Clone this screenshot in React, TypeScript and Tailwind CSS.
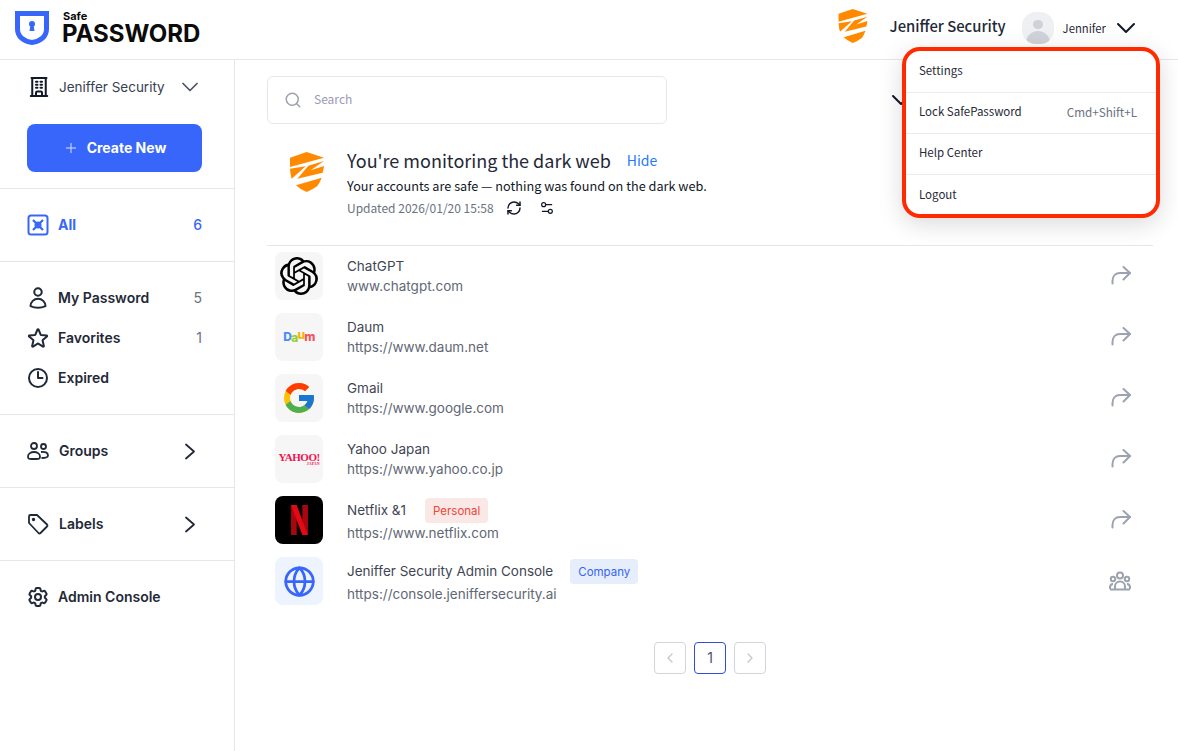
import { ChevronDown, ChevronLeft, ChevronRight, Globe, Plus, RefreshCw, Search, Settings2 } from 'lucide-react'
import { FcGoogle } from 'react-icons/fc'
import { HiOutlineBuildingOffice, HiOutlineClock, HiOutlineCog6Tooth, HiOutlineStar, HiOutlineUser } from 'react-icons/hi2'
import { SiOpenai } from 'react-icons/si'

function ZShield({ className }: { className: string }) {
  return (
    <svg viewBox="0 0 102 120" className={className} fill="#ff8a00">
      <path d="M0 17 50 0 102 17 0 45Z" />
      <path d="M0 50 47 43 5 80Q1 65 0 50Z" />
      <path d="M102 27 55 41 22 80 98 62Q101 52 102 42L62 55Z" />
      <path d="M18 100 95 77Q90 92 82 102 68 113 50 120 30 112 18 100Z" />
    </svg>
  )
}

function ShareArrow() {
  return (
    <svg viewBox="0 0 22 20" className="h-5 w-[22px]" fill="none" stroke="#9ca3af" strokeWidth="2" strokeLinecap="round" strokeLinejoin="round">
      <path d="M3.500 17.500V15C3.500 10 6.500 7 11 7H21" />
      <path d="M14.500 1 21 7 14.500 13.500" />
    </svg>
  )
}

function TeamIcon() {
  return (
    <svg viewBox="0 0 22 20" className="h-5 w-[22px]" fill="none" stroke="#9ca3af" strokeWidth="2">
      <circle cx="11" cy="4.500" r="3" />
      <circle cx="4" cy="8" r="2.200" />
      <circle cx="18" cy="8" r="2.200" />
      <path d="M6 18v-2.500a5 5 0 0 1 10 0V18" />
      <path d="M1 18v-1.500C1 14 2 13 4 13M21 18v-1.500c0-2.500-1-3.500-3-3.500M1 18.500h20" />
    </svg>
  )
}

function NavCount({ value }: { value: number }) {
  return <span className="ml-auto text-sm font-normal text-[#6b7280]">{value}</span>
}

function NavChevron() {
  return (
    <svg viewBox="0 0 12 17" className="ml-auto mr-[6px] h-[17px] w-3" fill="none" stroke="#1f2937" strokeWidth="1.800" strokeLinecap="round" strokeLinejoin="round">
      <path d="M2 1.500 10 8.500 2 15.500" />
    </svg>
  )
}

const rows = [
  { name: 'ChatGPT', url: 'www.chatgpt.com', logo: <SiOpenai className="h-[38px] w-[38px] text-black" /> },
  {
    name: 'Daum',
    url: 'https://www.daum.net',
    logo: (
      <span className="flex items-center text-xs font-extrabold leading-none tracking-[-0.8px]">
        <span className="text-[#4a8cf7]">D</span>
        <span className="translate-y-[1px] text-[#9acd32]">a</span>
        <span className="-translate-y-[2px] text-[#f6b500]">u</span>
        <span className="text-[#f2545b]">m</span>
      </span>
    ),
  },
  { name: 'Gmail', url: 'https://www.google.com', logo: <FcGoogle className="h-9 w-9" /> },
  {
    name: 'Yahoo Japan',
    url: 'https://www.yahoo.co.jp',
    logo: (
      <span className="flex flex-col items-end text-[11px] font-bold leading-[9px] tracking-[-0.5px] text-[#f0134d] [font-family:'Liberation_Serif',serif]">
        YAHOO!
        <span className="text-[4px] leading-[4px] tracking-normal">JAPAN</span>
      </span>
    ),
  },
  {
    name: 'Netflix &1',
    url: 'https://www.netflix.com',
    tile: 'bg-black',
    tag: 'Personal',
    tagClass: 'ml-[19px] bg-[#fae8e6] text-[#f04438]',
    logo: (
      <svg viewBox="0 0 18 32" className="h-[30px] w-[17px]">
        <path d="M0 0h6v32l-6 .6z" fill="#a80710" />
        <path d="M12 0h6v32.600l-6-.600z" fill="#a80710" />
        <path d="M0 0h6l12 32.600-6-.600z" fill="#e50914" />
      </svg>
    ),
  },
  {
    name: 'Jeniffer Security Admin Console',
    url: 'https://console.jeniffersecurity.ai',
    tile: 'bg-[#eef4ff]',
    tag: 'Company',
    tagClass: 'ml-[17px] bg-[#e6eefc] text-[#3563f5]',
    team: true,
    logo: <Globe className="h-[33px] w-[33px] text-[#3866fb]" strokeWidth={2} />,
  },
]

export default function App() {
  return (
    <div className="relative flex h-[751px] w-[1178px] flex-col overflow-hidden bg-white text-[#1f2937] [font-family:Inter,sans-serif]">
      <header className="flex h-[60px] shrink-0 items-center justify-between border-b border-[#e5e7eb] pb-[3px] pl-[15px] pr-9">
        <div className="flex items-center gap-[13px]">
          <svg viewBox="0 0 34 34" className="h-[34px] w-[34px]" fill="none">
            <path d="M2.500 2.500h29V18c0 7.500-6 12.500-14.500 13.500C8.500 30.500 2.500 25.500 2.500 18z" stroke="#3866fb" strokeWidth="5" />
            <circle cx="17" cy="13" r="3" fill="#3866fb" />
            <path d="M15.500 14h3l1 6h-5z" fill="#3866fb" />
          </svg>
          <div className="flex flex-col text-[#0b0b0b]">
            <span className="-mt-[1px] ml-[1px] text-[11px] font-bold leading-[12px]">Safe</span>
            <span className="text-[24px] font-bold leading-[24px]">PASSWORD</span>
          </div>
        </div>
        <div className="flex items-center [font-family:'Noto_Sans_CJK_KR',sans-serif]">
          <ZShield className="-mt-1 h-[34px] w-[30px]" />
          <span className="ml-[22px] -translate-y-[2px] text-[14.800px] font-medium">Jeniffer Security</span>
          <span className="ml-4 flex h-8 w-8 flex-col items-center overflow-hidden rounded-[14px] bg-[#eff0f3]">
            <span className="mt-2 h-[10px] w-[10px] rounded-full bg-[#cfd2d9]" />
            <span className="mt-[2px] h-[14px] w-6 rounded-t-full bg-[#cfd2d9]" />
          </span>
          <span className="ml-[9px] text-[11.300px]">Jennifer</span>
          <ChevronDown className="ml-1 h-8 w-8 text-[#111827]" strokeWidth={1.500} />
        </div>
      </header>

      <div className="flex min-h-0 flex-1">
        <aside className="w-[235px] shrink-0 border-r border-[#e5e7eb]">
          <div className="border-b border-[#e5e7eb] px-[27px] pb-4 pt-[7px]">
            <div className="flex h-10 items-center">
              <HiOutlineBuildingOffice className="h-6 w-6 text-[#111827] [stroke-width:2]" />
              <span className="ml-2 text-[13.500px] text-[#374151]">Jeniffer Security</span>
              <ChevronDown className="ml-auto mr-[3px] h-7 w-7 text-[#4b5563]" strokeWidth={1.500} />
            </div>
            <button className="mt-[17px] flex h-12 w-[175px] items-center justify-center gap-2 rounded-lg bg-[#3866fb] text-sm font-bold text-white">
              <Plus className="h-4 w-4 opacity-80" strokeWidth={1.500} />
              Create New
            </button>
          </div>

          <div className="flex h-[73px] items-center border-b border-[#e5e7eb] pl-[27px] pr-[32px] text-sm font-bold text-[#3866fb]">
            <svg viewBox="0 0 22 22" className="h-[22px] w-[22px]" fill="none" stroke="#3866fb" strokeWidth="2">
              <rect x="1.500" y="1.500" width="19" height="19" rx="2.500" />
              <path d="M6 6l10 10M16 6 6 16" strokeWidth="2.200" />
              <circle cx="11" cy="11" r="2.500" />
            </svg>
            <span className="ml-[9px]">All</span>
            <span className="ml-auto font-medium">6</span>
          </div>

          <div className="flex flex-col border-b border-[#e5e7eb] py-4 pl-[26px] pr-[32px] text-sm font-semibold">
            <div className="flex h-10 items-center gap-2">
              <HiOutlineUser className="h-6 w-6 [stroke-width:2]" />
              My Password
              <NavCount value={5} />
            </div>
            <div className="flex h-10 items-center gap-2">
              <HiOutlineStar className="h-6 w-6 [stroke-width:2]" />
              Favorites
              <NavCount value={1} />
            </div>
            <div className="flex h-10 items-center gap-2">
              <HiOutlineClock className="h-6 w-6 [stroke-width:2]" />
              Expired
            </div>
          </div>

          <div className="flex h-[73px] items-center gap-[10px] border-b border-[#e5e7eb] pl-[27px] pr-[32px] text-sm font-semibold">
            <svg viewBox="0 0 22 18" className="h-[18px] w-[22px]" fill="none" stroke="#1f2937" strokeWidth="1.800">
              <circle cx="7" cy="4" r="3" />
              <circle cx="16.500" cy="4.500" r="2.500" />
              <path d="M1 14.500C1 11.500 4 10 7 10s6 1.500 6 4.500-1.500 2.500-6 2.500-6 .5-6-2.500z" />
              <path d="M14 10c4-.5 7 .5 7 3.500 0 2-2 2.500-6.500 2.500" />
            </svg>
            Groups
            <NavChevron />
          </div>

          <div className="flex h-[73px] items-center gap-[10px] border-b border-[#e5e7eb] pl-[27px] pr-[32px] text-sm font-semibold">
            <svg viewBox="0 0 22 22" className="h-[22px] w-[22px]" fill="none" stroke="#1f2937" strokeWidth="1.800" strokeLinejoin="round">
              <path d="M2 3.500A1.500 1.500 0 0 1 3.500 2H10l10 9.500a1.500 1.500 0 0 1 0 2L13.500 20a1.500 1.500 0 0 1-2 0L2 10z" />
              <circle cx="6.500" cy="6.500" r=".8" fill="#1f2937" />
            </svg>
            Labels
            <NavChevron />
          </div>

          <div className="flex h-[72px] items-center gap-2 pl-[26px] text-sm font-semibold">
            <HiOutlineCog6Tooth className="h-6 w-6 [stroke-width:2]" />
            Admin Console
          </div>
        </aside>

        <main className="min-w-0 flex-1 pl-8 pr-[25px] pt-4">
          <div className="flex items-center">
            <div className="flex h-12 w-[400px] items-center rounded-md border border-[#e5e7eb] pl-4">
              <Search className="h-[18px] w-[18px] text-[#9ca3af]" />
              <span className="ml-3 -translate-y-[1px] text-xs text-[#9a9ab5] [font-family:'Noto_Sans_CJK_KR',sans-serif]">Search</span>
            </div>
            <ChevronDown className="ml-[218px] h-8 w-8 text-[#111827]" strokeWidth={1.500} />
          </div>

          <div className="flex border-b border-[#e5e7eb] pb-[27px] pl-[22px] pt-[23px] [font-family:'Noto_Sans_CJK_KR',sans-serif]">
            <ZShield className="mt-[5px] h-[40px] w-[36px]" />
            <div className="ml-[22px]">
              <div className="flex h-[26px] items-center">
                <span className="text-lg text-[#1f2937]">You're monitoring the dark web</span>
                <span className="ml-4 text-sm text-[#1f7aff]">Hide</span>
              </div>
              <p className="mt-[3px] text-[12.700px] leading-[20px] text-[#111827]">Your accounts are safe — nothing was found on the dark web.</p>
              <div className="mt-[2px] flex h-5 items-center text-xs text-[#6b7280]">
                Updated 2026/01/20 15:58
                <RefreshCw className="ml-3 h-4 w-4 text-[#111827]" strokeWidth={2.200} />
                <Settings2 className="ml-[17px] h-4 w-4 text-[#111827]" strokeWidth={1.800} />
              </div>
            </div>
          </div>

          <ul className="mt-[6px] flex flex-col gap-[13px]">
            {rows.map((row) => (
              <li key={row.name} className="flex items-center pl-2 pr-[22px]">
                <div className={`flex h-12 w-12 items-center justify-center rounded-lg ${row.tile ?? 'bg-[#f6f6f7]'}`}>{row.logo}</div>
                <div className="ml-6 text-[13.500px] text-[#5f6775]">
                  <div className="flex items-center text-[#3f4653]">
                    <span className="leading-5">{row.name}</span>
                    {row.tag && <span className={`flex h-[25px] items-center rounded px-2 pt-[3px] text-[11.500px] ${row.tagClass}`}>{row.tag}</span>}
                  </div>
                  <div className="leading-5">{row.url}</div>
                </div>
                <div className="ml-auto">{row.team ? <TeamIcon /> : <ShareArrow />}</div>
              </li>
            ))}
          </ul>

          <div className="mt-[37px] flex justify-center gap-2 text-sm text-[#4b5563]">
            <span className="flex h-8 w-8 items-center justify-center rounded-sm border border-[#d1d5db] text-[#c4c8cf]">
              <ChevronLeft className="h-4 w-4" />
            </span>
            <span className="flex h-8 w-8 items-center justify-center rounded-sm border border-[#2f4fd8]">1</span>
            <span className="flex h-8 w-8 items-center justify-center rounded-sm border border-[#d1d5db] text-[#c4c8cf]">
              <ChevronRight className="h-4 w-4" />
            </span>
          </div>
        </main>
      </div>

      <div className="absolute left-[902px] top-[47px] h-[171px] w-[258px] overflow-hidden rounded-[18px] border-4 border-[#ff2a00] bg-white text-[11.500px] text-[#1f2937] shadow-[0_6px_24px_rgba(0,0,0,0.15)] [font-family:'Noto_Sans_CJK_KR',sans-serif]">
        <div className="flex h-[42px] items-center border-b border-[#e9ebef] pb-[2px] pl-[13px]">Settings</div>
        <div className="flex h-[41px] items-center justify-between border-b border-[#e9ebef] pb-[2px] pl-[13px] pr-[19px]">
          Lock SafePassword
          <span className="text-[11.700px] text-[#6b7280]">Cmd+Shift+L</span>
        </div>
        <div className="flex h-[41px] items-center border-b border-[#e9ebef] pb-[2px] pl-[13px]">Help Center</div>
        <div className="flex h-[39px] items-center pl-[13px]">Logout</div>
      </div>
    </div>
  )
}
